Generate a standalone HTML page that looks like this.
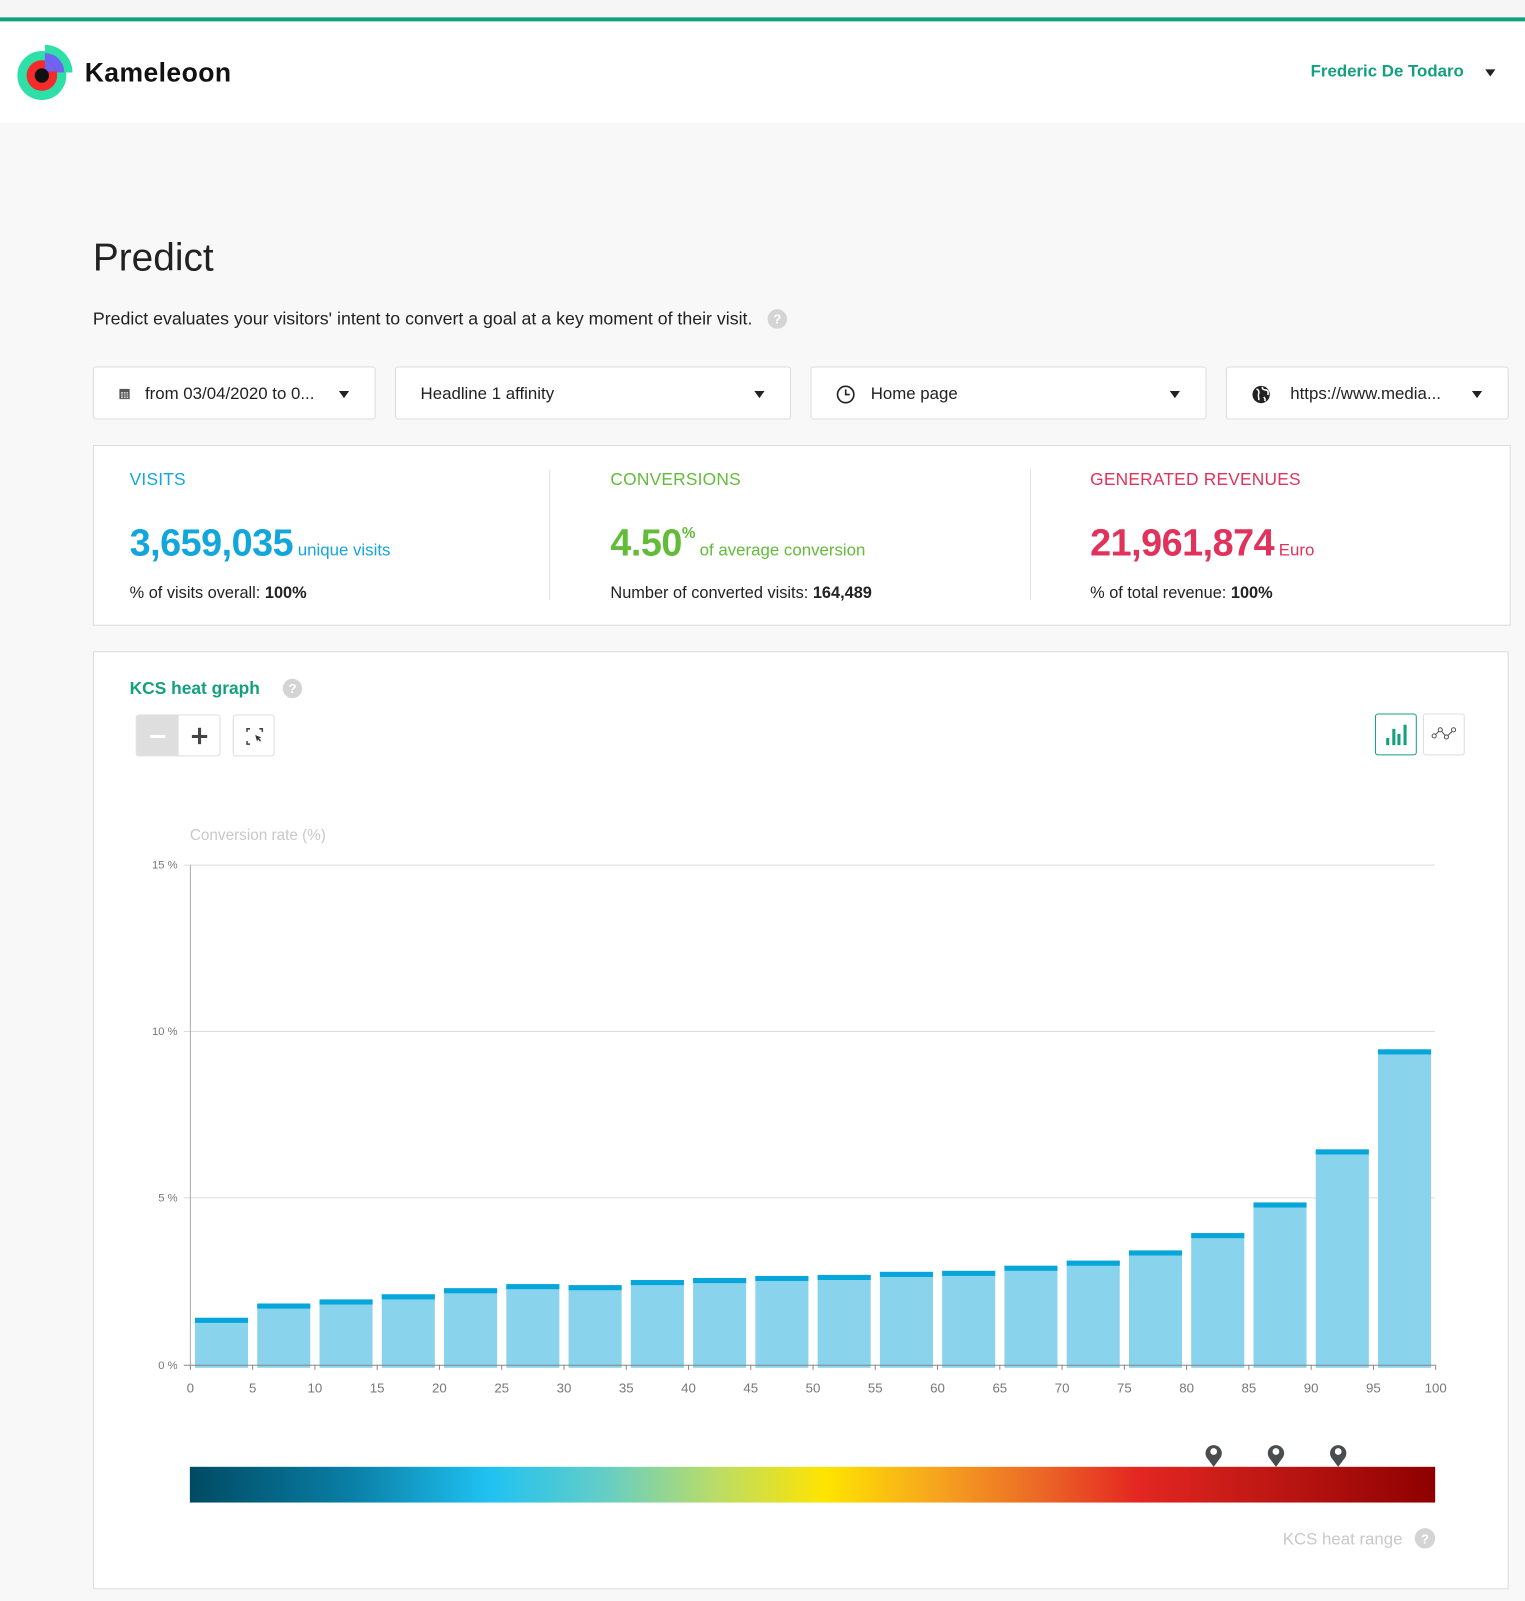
<!DOCTYPE html>
<html><head><meta charset="utf-8"><style>
html,body{margin:0;padding:0;background:#f8f8f8;width:1525px;height:1600px;overflow:hidden}
#w{position:absolute;left:0;top:0;width:1494px;height:1568px;transform:scale(1.02075);transform-origin:0 0;font-family:"Liberation Sans",sans-serif;color:#222}
.a{position:absolute}
.box{position:absolute;background:#fff;border:1px solid #dcdcdc;border-radius:3px;box-sizing:border-box}
.dd{top:359px;height:52px;font-size:16.5px;color:#222}
.dd span{position:absolute;top:17px}
.car{position:absolute;top:23px;width:0;height:0;border-left:5.5px solid transparent;border-right:5.5px solid transparent;border-top:7px solid #222}
.lab{position:absolute;top:460px;font-size:17px;letter-spacing:0.2px}
.big{position:absolute;top:511px;font-size:37px;font-weight:bold;letter-spacing:-0.5px}
.sub{position:absolute;top:573px;font-size:16px;color:#222}
.help{position:absolute;width:19px;height:19px;border-radius:50%;background:#d4d4d4;color:#fff;font-size:13px;font-weight:bold;text-align:center;line-height:19px}
</style></head><body><div id="w">
<div class="a" style="left:0;top:0;width:1494px;height:17px;background:#f6f6f6"></div>
<div class="a" style="left:0;top:17px;width:1494px;height:4px;background:#13a07f"></div>
<div class="a" style="left:0;top:21px;width:1494px;height:99px;background:#fff"></div>
<svg class="a" style="left:17px;top:42px" width="58" height="58" viewBox="0 0 58 58">
<path d="M27 2 A27 27 0 0 1 54 29 L46 29 A19 19 0 0 0 27 10 Z" fill="#2ee0a8"/>
<circle cx="24" cy="32" r="24" fill="#2ee0a8"/>
<path d="M27 10 A19 19 0 0 1 46 29 L27 29 Z" fill="#6e63f2"/>
<circle cx="24" cy="32" r="15" fill="#f52a2a"/>
<path d="M27 17 A15 15 0 0 1 38 28 L27 28 Z" fill="#6e63f2"/>
<circle cx="24" cy="32" r="7" fill="#111"/>
</svg>
<div class="a" style="left:83px;top:56px;font-size:26px;font-weight:bold;color:#111;letter-spacing:0.4px">Kameleoon</div>
<div class="a" style="left:1284px;top:61px;font-size:16.5px;font-weight:bold;color:#13a07f">Frederic De Todaro</div>
<div class="a" style="left:1455px;top:68px;border-left:5.5px solid transparent;border-right:5.5px solid transparent;border-top:7px solid #222"></div>

<div class="a" style="left:91px;top:232px;font-size:38px;color:#222">Predict</div>
<div class="a" style="left:91px;top:302px;font-size:17.4px;color:#222">Predict evaluates your visitors' intent to convert a goal at a key moment of their visit.</div>
<div class="help" style="left:752px;top:303px">?</div>

<div class="box dd" style="left:91px;width:277px"><svg class="a" style="left:24px;top:20px" width="12" height="12" viewBox="0 0 12 12"><rect x="1" y="1" width="10" height="10" fill="#555"/><rect x="2.5" y="4" width="7" height="6" fill="#ccc"/><path d="M2.5 6h7M2.5 8h7M5 4v6M7.5 4v6" stroke="#555" stroke-width="0.8"/></svg><span style="left:50px">from 03/04/2020 to 0...</span><div class="car" style="left:240px"></div></div>
<div class="box dd" style="left:387px;width:388px"><span style="left:24px">Headline 1 affinity</span><div class="car" style="left:351px"></div></div>
<div class="box dd" style="left:794px;width:388px"><svg class="a" style="left:24px;top:17px" width="19" height="19" viewBox="0 0 19 19"><circle cx="9.5" cy="9.5" r="8" fill="none" stroke="#222" stroke-width="1.6"/><path d="M9.5 4.5v5h4" fill="none" stroke="#222" stroke-width="1.6"/></svg><span style="left:58px">Home page</span><div class="car" style="left:351px"></div></div>
<div class="box dd" style="left:1201px;width:277px"><svg class="a" style="left:24px;top:17px" width="19" height="19" viewBox="0 0 19 19"><circle cx="9.5" cy="9.5" r="8.5" fill="#222"/><path d="M5 4c2 1 3 3 2 5s1 4 0 6M11 2c-1 2 1 3 3 3s3 2 2 5M12 12c1 1 2 2 1 4" stroke="#fff" stroke-width="1.5" fill="none"/></svg><span style="left:62px">https://www.media...</span><div class="car" style="left:240px"></div></div>

<div class="box" style="left:91px;top:436px;width:1389px;height:177px;border-radius:0"></div>
<div class="a" style="left:538px;top:460px;width:1px;height:128px;background:#e0e0e0"></div>
<div class="a" style="left:1009px;top:460px;width:1px;height:128px;background:#e0e0e0"></div>
<div class="lab" style="left:127px;color:#13a6dc">VISITS</div>
<div class="lab" style="left:598px;color:#63bb3a">CONVERSIONS</div>
<div class="lab" style="left:1068px;color:#e0325a">GENERATED REVENUES</div>
<div class="big" style="left:127px;color:#13a6dc">3,659,035<span style="font-size:16.5px;font-weight:normal;letter-spacing:0"> unique visits</span></div>
<div class="big" style="left:598px;color:#63bb3a">4.50<sup style="font-size:15px;position:relative;top:-4px">%</sup><span style="font-size:16.5px;font-weight:normal;letter-spacing:0"> of average conversion</span></div>
<div class="big" style="left:1068px;color:#e0325a">21,961,874<span style="font-size:16.5px;font-weight:normal;letter-spacing:0"> Euro</span></div>
<div class="sub" style="left:127px">% of visits overall: <b>100%</b></div>
<div class="sub" style="left:598px">Number of converted visits: <b>164,489</b></div>
<div class="sub" style="left:1068px">% of total revenue: <b>100%</b></div>

<div class="box" style="left:91px;top:638px;width:1387px;height:919px;border-radius:0"></div>
<div class="a" style="left:127px;top:665px;font-size:17px;font-weight:bold;color:#13a07f">KCS heat graph</div>
<div class="help" style="left:277px;top:665px">?</div>
<div class="box" style="left:133px;top:700px;width:83px;height:41px;overflow:hidden"><div class="a" style="left:0;top:0;width:41px;height:41px;background:#dedede"></div><div class="a" style="left:13px;top:19px;width:15px;height:3px;background:#fff"></div><div class="a" style="left:54px;top:19px;width:15px;height:2.5px;background:#444"></div><div class="a" style="left:60.3px;top:12px;width:2.5px;height:16px;background:#444"></div></div>
<div class="box" style="left:228px;top:700px;width:41px;height:41px"><svg class="a" style="left:12px;top:12px" width="17" height="17" viewBox="0 0 17 17"><path d="M1 4V1h3M13 1h3v3M1 13v3h3" fill="none" stroke="#444" stroke-width="1.5"/><path d="M9 7l6 2.5-2.3.8 2 2.2-1 1-2-2.2-.8 2.3z" fill="#333"/></svg></div>
<div class="box" style="left:1347px;top:699px;width:41px;height:41px;border:1.5px solid #13a07f"><svg class="a" style="left:9px;top:8px" width="22" height="24" viewBox="0 0 22 24"><rect x="1" y="15" width="3" height="7" fill="#13a07f"/><rect x="7" y="6" width="3" height="16" fill="#13a07f"/><rect x="12" y="11" width="3" height="11" fill="#13a07f"/><rect x="18" y="2" width="3" height="20" fill="#13a07f"/></svg></div>
<div class="box" style="left:1394px;top:699px;width:41px;height:41px"><svg class="a" style="left:7px;top:11px" width="26" height="16" viewBox="0 0 26 16"><path d="M3 10L9 4L15 11L22 4" fill="none" stroke="#555" stroke-width="1"/><circle cx="3" cy="10" r="2" fill="#fff" stroke="#555"/><circle cx="9" cy="4" r="2" fill="#fff" stroke="#555"/><circle cx="15" cy="11" r="2" fill="#fff" stroke="#555"/><circle cx="22" cy="4" r="2" fill="#fff" stroke="#555"/></svg></div>

<svg class="a" style="left:0;top:0" width="1494" height="1568" viewBox="0 0 1494 1568" font-family="Liberation Sans, sans-serif">
<defs><linearGradient id="g" x1="0" x2="1"><stop offset="0" stop-color="#004a63"/><stop offset="0.13" stop-color="#0a7fa6"/><stop offset="0.24" stop-color="#1fc2f2"/><stop offset="0.33" stop-color="#62cdc8"/><stop offset="0.42" stop-color="#b8dc6a"/><stop offset="0.51" stop-color="#ffe400"/><stop offset="0.6" stop-color="#f6a41e"/><stop offset="0.68" stop-color="#ec6a26"/><stop offset="0.76" stop-color="#e42722"/><stop offset="0.9" stop-color="#b3120f"/><stop offset="1" stop-color="#8e0000"/></linearGradient></defs>
<text x="186" y="823" font-size="15" fill="#c8c8c8">Conversion rate (%)</text>
<g stroke="#dcdcdc" stroke-width="1"><line x1="180" y1="847.5" x2="1406" y2="847.5"/><line x1="180" y1="1010.5" x2="1406" y2="1010.5"/><line x1="180" y1="1173.5" x2="1406" y2="1173.5"/></g>
<line x1="186.5" y1="847" x2="186.5" y2="1337" stroke="#aaa"/>
<g font-size="11" fill="#777" text-anchor="end"><text x="174" y="851">15 %</text><text x="174" y="1014">10 %</text><text x="174" y="1177">5 %</text><text x="174" y="1341">0 %</text></g>
<g id="bars"></g>
<line x1="180" y1="1337.5" x2="1406" y2="1337.5" stroke="#888"/>
<g id="ticks" stroke="#888"></g>
<g id="xl" font-size="13" fill="#777" text-anchor="middle"></g>
<rect x="186" y="1437" width="1220" height="35" fill="url(#g)"/>
<g fill="#4a4d50">
<path d="M1189 1437 l-6 -8 a8 8 0 1 1 12 0 z"/><circle cx="1189" cy="1422" r="3.3" fill="#fff"/>
<path d="M1250 1437 l-6 -8 a8 8 0 1 1 12 0 z"/><circle cx="1250" cy="1422" r="3.3" fill="#fff"/>
<path d="M1311 1437 l-6 -8 a8 8 0 1 1 12 0 z"/><circle cx="1311" cy="1422" r="3.3" fill="#fff"/>
</g>
<text x="1374" y="1513" font-size="16.5" fill="#c8c8c8" text-anchor="end">KCS heat range</text>
<circle cx="1396" cy="1507" r="10" fill="#d4d4d4"/><text x="1396" y="1512" font-size="13" font-weight="bold" fill="#fff" text-anchor="middle">?</text>
</svg>
<script>
var t=[1291,1277,1273,1268,1262,1258,1259,1254,1252,1250,1249,1246,1245,1240,1235,1225,1208,1178,1126,1028];
var s='',k='',l='';
for(var i=0;i<20;i++){var x=191+i*61;s+='<rect x="'+x+'" y="'+t[i]+'" width="52" height="'+(1340-t[i])+'" fill="#8ad3ec"/><rect x="'+x+'" y="'+t[i]+'" width="52" height="5" fill="#07a6da"/>';}
for(var j=0;j<=20;j++){var xx=186.5+j*61;k+='<line x1="'+xx+'" y1="1337" x2="'+xx+'" y2="1342"/>';l+='<text x="'+xx+'" y="1364">'+(j*5)+'</text>';}
document.getElementById('bars').innerHTML=s;document.getElementById('ticks').innerHTML=k;document.getElementById('xl').innerHTML=l;
</script>
</div></body></html>
